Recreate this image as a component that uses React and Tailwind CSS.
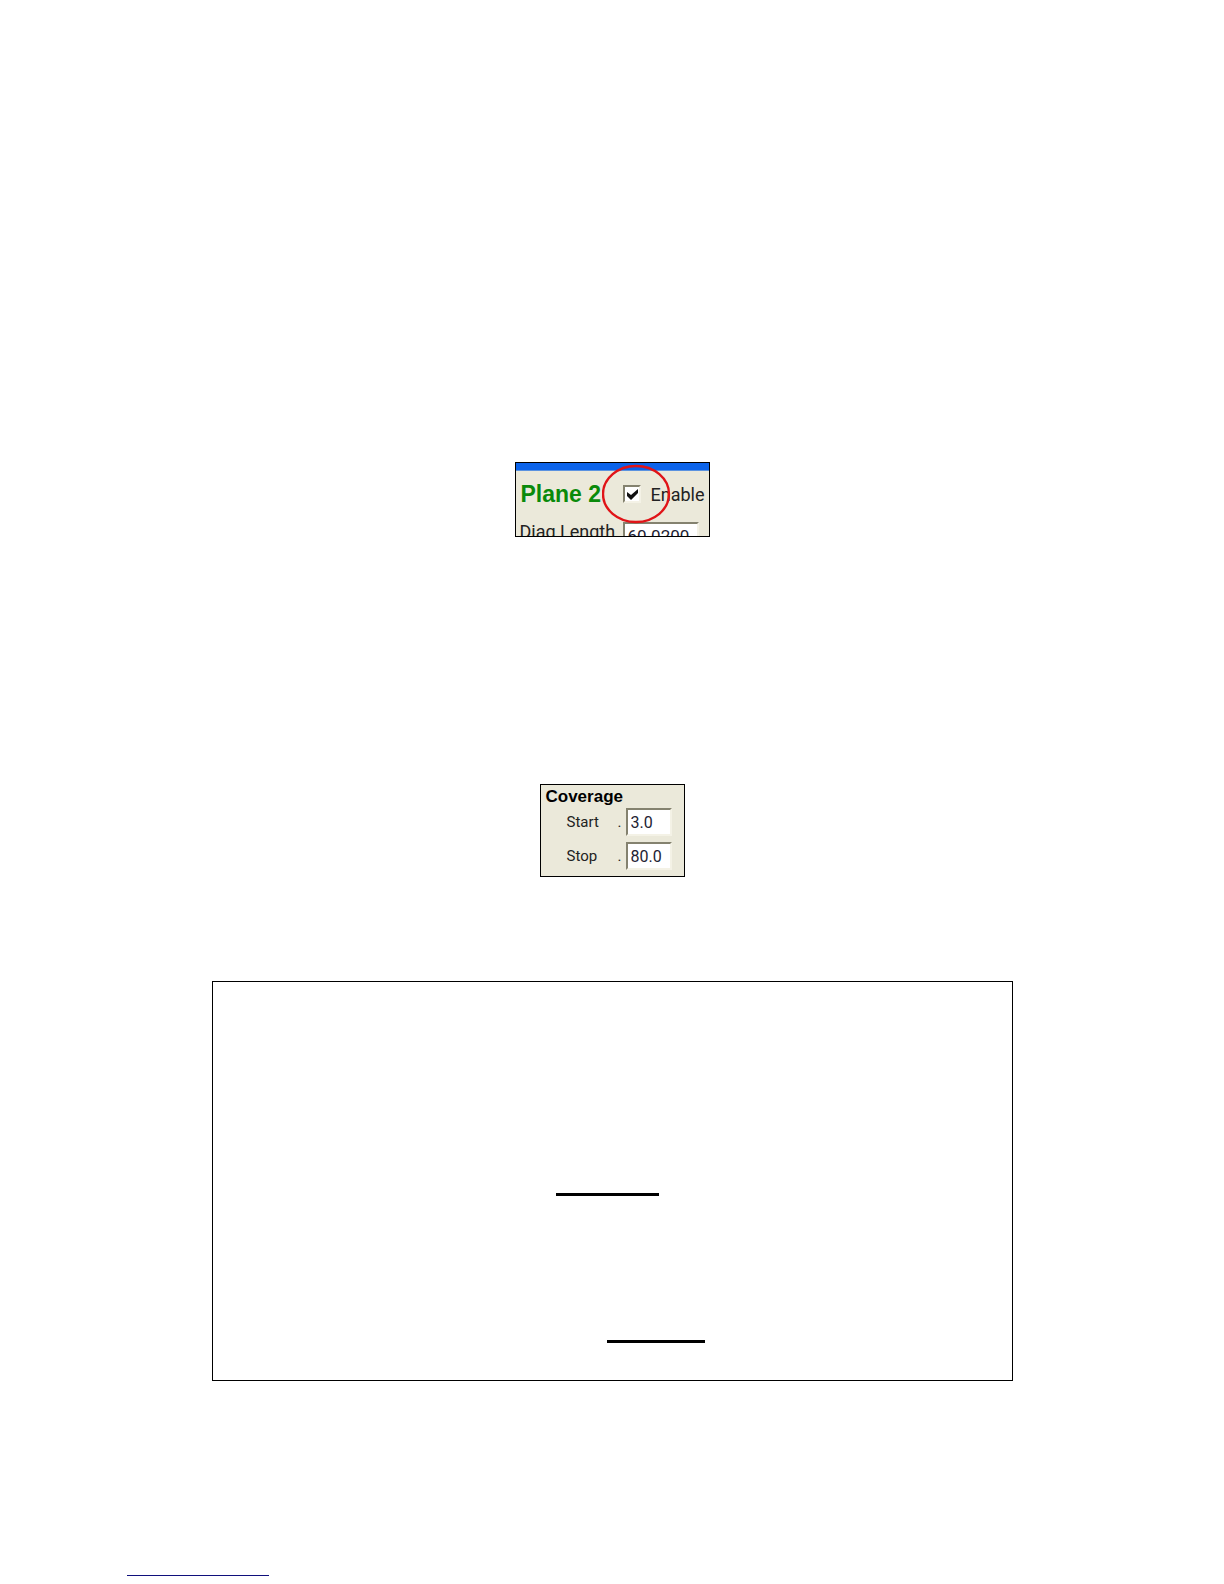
import { useState } from 'react'

const sunken = 'border-2 border-t-[#84826f] border-l-[#84826f] border-r-[#f4f2e6] border-b-[#f4f2e6] bg-white'

function PlanePanel() {
  const [enabled, setEnabled] = useState(true)
  const [length, setLength] = useState('60.0200')

  return (
    <section className="relative w-[195px] h-[75px] overflow-hidden border border-black bg-[#ebe9da]">
      <div className="h-2 border-b border-[#5b93e0] bg-[#0b63ea]" />
      <div className="flex items-center h-[46px] pl-[5px]">
        <h2 className="w-[102px] font-['Liberation_Sans'] text-[23px] font-bold text-[#0a8a0a]">Plane 2</h2>
        <label className="flex items-center gap-[10px] text-[18px] text-[#222222]">
          <span className="relative block size-[18px]">
            <input
              type="checkbox"
              checked={enabled}
              onChange={(e) => setEnabled(e.target.checked)}
              className={`block size-[18px] appearance-none ${sunken}`}
            />
            {enabled && (
              <svg className="pointer-events-none absolute inset-0" viewBox="0 0 18 18">
                <path d="M4 7v4l4 4 7-7V4L8 10z" fill="#111111" />
              </svg>
            )}
          </span>
          Enable
        </label>
      </div>
      <div className="flex h-8 items-start pt-[5px] pl-1">
        <label htmlFor="diag-length" className="w-[103px] text-[18px] leading-5 text-[#222222]">
          Diag Length
        </label>
        <input
          id="diag-length"
          value={length}
          onChange={(e) => setLength(e.target.value)}
          className={`h-7 w-[76px] px-[3px] text-[17px] text-[#222233] ${sunken}`}
        />
      </div>
      {/* red ring around the checkbox */}
      <svg className="pointer-events-none absolute top-px left-[86px] h-[60px] w-[70px]" viewBox="0 0 70 60">
        <ellipse cx="34" cy="30" rx="33" ry="28" fill="none" stroke="#e01418" strokeWidth="2.4" />
      </svg>
    </section>
  )
}

function CoverageRow({ id, label, value, onChange }) {
  return (
    <div className="flex items-center">
      <label htmlFor={id} className="w-[51px] text-[15px] leading-5 text-[#222222]">{label}</label>
      <span className="w-2 text-[15px] leading-5 text-[#222222]">.</span>
      <input
        id={id}
        value={value}
        onChange={(e) => onChange(e.target.value)}
        className={`h-7 w-[46px] px-[3px] text-[16px] text-[#222233] ${sunken}`}
      />
    </div>
  )
}

function CoveragePanel() {
  const [start, setStart] = useState('3.0')
  const [stop, setStop] = useState('80.0')

  return (
    <section className="w-[145px] h-[93px] overflow-hidden border border-black bg-[#ebe9da] pt-px">
      <h2 className="pl-[5px] font-['Liberation_Sans'] text-[17px] leading-[22px] font-bold text-black">Coverage</h2>
      <div className="flex flex-col gap-[6px] pl-[26px]">
        <CoverageRow id="start" label="Start" value={start} onChange={setStart} />
        <CoverageRow id="stop" label="Stop" value={stop} onChange={setStop} />
      </div>
    </section>
  )
}

export default function App() {
  return (
    <main className="flex min-h-screen flex-col items-center bg-white pt-[462px] font-['Roboto',sans-serif]">
      <PlanePanel />
      <div className="mt-[247px]">
        <CoveragePanel />
      </div>
      <div className="mt-[104px] flex h-[400px] w-[801px] max-w-full flex-col border border-black pt-[211px]">
        <hr className="ml-[343px] h-[3px] w-[103px] border-0 bg-black" />
        <hr className="mt-[144px] ml-[394px] h-[3px] w-[98px] border-0 bg-black" />
      </div>
      <footer className="w-full pt-[194px] pb-2 pl-[127px]">
        <hr className="h-px w-[142px] border-0 bg-[#10107c]" />
      </footer>
    </main>
  )
}
